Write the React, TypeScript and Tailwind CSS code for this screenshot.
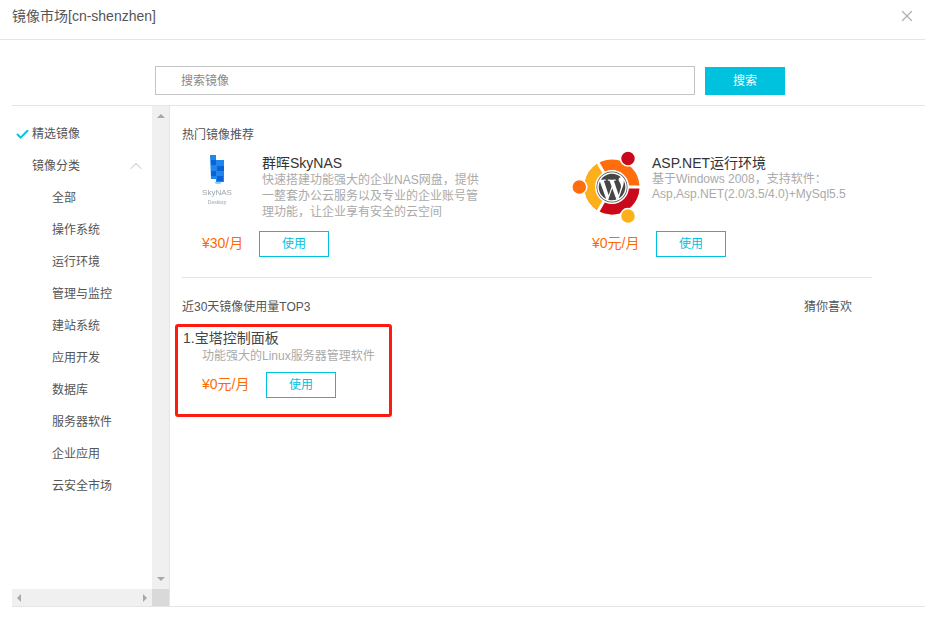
import React from 'react';
import { FaWordpress } from 'react-icons/fa';
import { ChevronUp, Check, X } from 'lucide-react';

const categories = ['全部', '操作系统', '运行环境', '管理与监控', '建站系统', '应用开发', '数据库', '服务器软件', '企业应用', '云安全市场'];

const UseButton = () => (
  <button className="w-[70px] h-[26px] border border-[#00c1de] text-xs text-[#00c1de] bg-white">使用</button>
);

const Price: React.FC<{ text: string; className: string }> = ({ text, className }) => (
  <span className={`text-sm text-[#ff6a00] -mt-[2px] ${className}`}>{text}</span>
);

const SkyNasLogo = () => (
  <div className="w-[50px] flex flex-col items-center blur-[0.6px]">
    <svg width="16" height="31" viewBox="0 0 16 31" className="mb-[3px]">
      <path d="M1 1h6v5h8v22H7v-3H2z" fill="#1f86ee" />
      <path d="M2 6h5v5H2zM8 12h7v5H8zM2 17h5v5H2zM8 22h6v5H8z" fill="#0b62d6" />
      <path d="M5 28h8l-2 2H7z" fill="#8fd0fa" />
    </svg>
    <span className="text-[8px] leading-[10px] text-[#9aa6b2]">SkyNAS</span>
    <span className="text-[5px] leading-[8px] text-[#9aa6b2]">Desktop</span>
  </div>
);

const UbuntuLogo = () => (
  <div className="relative w-20 h-20">
    <svg width="80" height="80" viewBox="-40 -40 80 80">
      <circle r="22" fill="none" stroke="#ff6d0c" strokeWidth="11" />
      <path d="M-11-19A22 22 0 0 0-11 19" fill="none" stroke="#fdb01a" strokeWidth="11" />
      <path d="M22 0A22 22 0 0 1-11 19" fill="none" stroke="#c9091b" strokeWidth="11" />
      <path d="M12 0H32M-6-10.4L-16-27.7M-6 10.4L-16 27.7" stroke="#fff" strokeWidth="3" />
      <circle cx="16" cy="-28.5" r="7.5" fill="#c9091b" stroke="#fff" strokeWidth="1.5" />
      <circle cx="-32.7" cy="0" r="7.5" fill="#ff6d0c" stroke="#fff" strokeWidth="1.5" />
      <circle cx="16" cy="29" r="7.5" fill="#fdb01a" stroke="#fff" strokeWidth="1.5" />
      <circle r="17" fill="#fff" />
    </svg>
    <div className="absolute inset-0 flex items-center justify-center">
      <FaWordpress className="w-8 h-8 text-[#464646]" />
    </div>
  </div>
);

export default function App() {
  return (
    <div
      className="w-[925px] h-[640px] bg-white text-[#555] overflow-hidden"
      style={{ fontFamily: '"Liberation Sans", "Noto Sans CJK SC", sans-serif' }}
    >
      {/* header */}
      <div className="h-10 border-b border-[#e5e5e5] pl-3 pr-[9px] flex items-center justify-between">
        <span className="text-[14px] text-[#555] -mt-[6px]">镜像市场[cn-shenzhen]</span>
        <X className="w-[18px] h-[18px] text-[#aaa] -mt-[7px]" strokeWidth={1.5} />
      </div>

      {/* search */}
      <div className="h-[65px] pt-[26px] pl-[155px] flex items-start gap-[10px]">
        <div className="w-[540px] h-[29px] border border-[#c4c4c4] pl-[25px] flex items-center text-xs text-[#888]">搜索镜像</div>
        <button className="w-20 h-[28px] mt-px bg-[#00c1de] text-xs text-white">搜索</button>
      </div>

      {/* main */}
      <div className="ml-3 h-[502px] border-y border-[#e5e5e5] flex">
        {/* sidebar */}
        <div className="w-[158px] shrink-0 flex flex-col border-r border-[#e5e5e5]">
          <div className="flex flex-1 min-h-0">
            <div className="w-[140px] pt-3 text-xs text-[#555]">
              <div className="h-8 flex items-center relative pl-5">
                <Check className="absolute left-[3px] w-[15px] h-[15px] text-[#00c1de]" strokeWidth={3} />
                精选镜像
              </div>
              <div className="h-8 flex items-center justify-between pl-5 pr-[6px]">
                镜像分类
                <ChevronUp className="w-[20px] h-[20px] text-[#ccc]" strokeWidth={1.25} />
              </div>
              {categories.map(name => (
                <div key={name} className="h-8 flex items-center pl-10">{name}</div>
              ))}
            </div>
            <div className="w-[17px] bg-[#f0f0f0] flex flex-col items-center justify-between py-[8px]">
              <div className="w-0 h-0 border-x-[4px] border-x-transparent border-b-[4px] border-b-[#a8a8a8]" />
              <div className="w-0 h-0 border-x-[4px] border-x-transparent border-t-[4px] border-t-[#a8a8a8]" />
            </div>
          </div>
          <div className="h-[17px] flex shrink-0">
            <div className="w-[140px] bg-[#f0f0f0] flex items-center justify-between px-[5px]">
              <div className="w-0 h-0 border-y-[4px] border-y-transparent border-r-[4px] border-r-[#a8a8a8]" />
              <div className="w-0 h-0 border-y-[4px] border-y-transparent border-l-[4px] border-l-[#a8a8a8]" />
            </div>
            <div className="w-[17px] bg-[#d9d9d9]" />
          </div>
        </div>

        {/* content */}
        <div className="flex-1 pl-3 pt-[21px] text-xs">
          <div className="leading-4">热门镜像推荐</div>

          <div className="w-[690px] h-[135px] border-b border-[#e5e5e5] flex">
            {/* SkyNAS card */}
            <div className="w-[390px] shrink-0">
              <div className="flex h-[81px] pt-[11px]">
                <div className="w-[80px] pl-[10px]"><SkyNasLogo /></div>
                <div className="w-[222px]">
                  <div className="text-sm leading-[18px] text-[#333]">群晖SkyNAS</div>
                  <div className="leading-4 text-[#aaa]">快速搭建功能强大的企业NAS网盘，提供一整套办公云服务以及专业的企业账号管理功能，让企业享有安全的云空间</div>
                </div>
              </div>
              <div className="flex items-center pl-5 mt-[7px]">
                <Price text="¥30/月" className="w-[57px]" />
                <UseButton />
              </div>
            </div>

            {/* ASP.NET card */}
            <div className="flex-1">
              <div className="flex h-[81px]">
                <div className="w-[80px] mt-[4px]"><UbuntuLogo /></div>
                <div className="w-[210px] mt-[11px]">
                  <div className="text-sm leading-[18px] text-[#333]">ASP.NET运行环境</div>
                  <div className="leading-[15px] text-[#aaa]">基于Windows 2008，支持软件：<br />Asp,Asp.NET(2.0/3.5/4.0)+MySql5.5</div>
                </div>
              </div>
              <div className="flex items-center pl-5 mt-[7px]">
                <Price text="¥0元/月" className="w-[64px]" />
                <UseButton />
              </div>
            </div>
          </div>

          <div className="w-[670px] flex justify-between mt-[21px] leading-4">
            <span>近30天镜像使用量TOP3</span>
            <span>猜你喜欢</span>
          </div>

          {/* red annotation box */}
          <div className="relative mt-[11px]">
            <div className="absolute -left-[7px] -top-[2px] w-[217px] h-[93px] border-[3px] border-[#ff1a10] rounded-[3px]" />
            <div className="pl-px pt-[3px] text-sm leading-[18px] text-[#444]">1.宝塔控制面板</div>
            <div className="pl-5 mt-px leading-4 text-[#aaa]">功能强大的Linux服务器管理软件</div>
            <div className="flex items-center pl-5 mt-[8px]">
              <Price text="¥0元/月" className="w-[64px]" />
              <UseButton />
            </div>
          </div>
        </div>
      </div>
    </div>
  );
}
